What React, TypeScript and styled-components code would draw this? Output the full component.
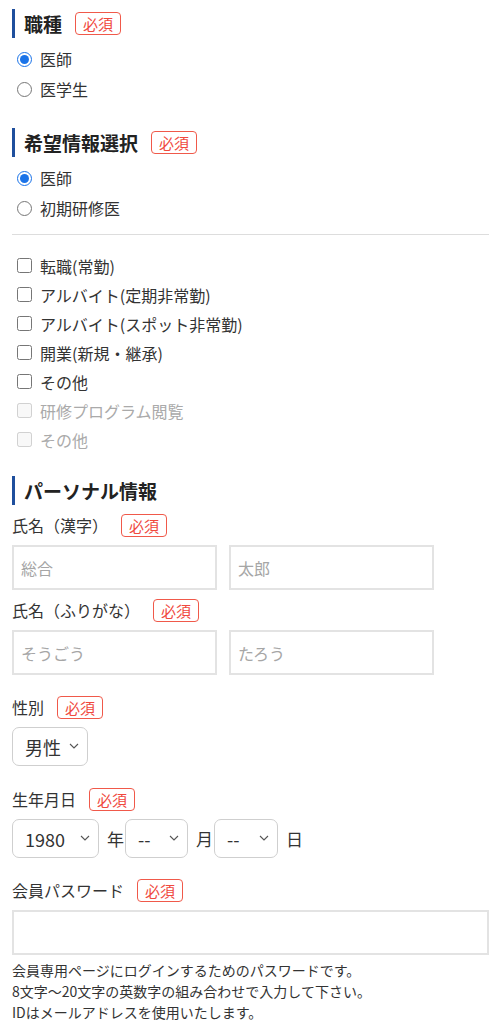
import React from 'react';
import styled, { createGlobalStyle } from 'styled-components';

const GlobalStyle = createGlobalStyle`
  body {
    margin: 0;
    background: #fff;
    color: #333;
    font-family: "Noto Sans CJK JP", "Noto Sans", sans-serif;
  }
  * {
    box-sizing: border-box;
  }
`;

const Page = styled.div`
  padding: 9px 6px 0 12px;
`;

const Section = styled.section<{ gap?: number }>`
  margin-top: ${(p) => p.gap ?? 0}px;
`;

const Heading = styled.h2`
  display: flex;
  align-items: center;
  margin: 0;
  height: 29px;
  padding-left: 9px;
  border-left: 3px solid #1f4f9d;
  font-size: 19px;
  font-weight: 700;
  color: #222;
`;

const Badge = styled.span`
  display: inline-flex;
  align-items: center;
  justify-content: center;
  height: 23px;
  margin-left: 13px;
  padding: 0 7px;
  border: 1.5px solid #f0594a;
  border-radius: 4px;
  color: #f0493e;
  font-size: 15px;
  font-weight: 400;
`;

const OptionList = styled.div<{ row: number; top?: number }>`
  display: flex;
  flex-direction: column;
  margin-top: ${(p) => p.top ?? 6}px;

  label {
    height: ${(p) => p.row}px;
  }
`;

const Option = styled.label<{ disabled?: boolean }>`
  display: flex;
  align-items: center;
  font-size: 16px;
  color: ${(p) => (p.disabled ? '#aaa' : '#333')};

  input {
    width: 15px;
    height: 15px;
    margin: 0 8px 0 5px;
    accent-color: #1a73e8;
  }
`;

const Divider = styled.hr`
  margin: 11px 0 0;
  border: none;
  border-top: 1.5px solid #ddd;
`;

const FieldLabel = styled.div`
  display: flex;
  align-items: center;
  height: 24px;
  font-size: 16px;
  color: #333;
`;

const Row = styled.div`
  display: flex;
  align-items: center;
  gap: 12px;
  margin-top: 8px;
`;

const TextInput = styled.input<{ wide?: boolean }>`
  width: ${(p) => (p.wide ? '477px' : '205px')};
  height: 45px;
  padding: 0 7px;
  border: 2px solid #e3e3e3;
  border-radius: 0;
  font-family: inherit;
  font-size: 16px;
  color: #333;
  outline: none;

  &::placeholder {
    color: #a6a6a6;
  }
`;

const SelectWrap = styled.div<{ w: number }>`
  position: relative;
  width: ${(p) => p.w}px;
  height: 39px;
`;

const Select = styled.select`
  appearance: none;
  width: 100%;
  height: 100%;
  padding: 0 0 0 12px;
  border: 1.5px solid #cfcfcf;
  border-radius: 7px;
  background: #fff;
  font-family: inherit;
  font-size: 18px;
  color: #333;
`;

const Chevron = styled.svg`
  position: absolute;
  right: 9px;
  top: 16px;
  pointer-events: none;
`;

const DateRow = styled.div`
  display: flex;
  align-items: center;
  margin-top: 8px;
  font-size: 17px;
  color: #333;
`;

const Unit = styled.span`
  margin: 0 1px 0 8px;
`;

const Help = styled.p`
  margin: 5px 0 0;
  font-size: 14px;
  line-height: 21px;
  color: #333;
`;

const Dropdown: React.FC<{ w: number; value: string }> = ({ w, value }) => (
  <SelectWrap w={w}>
    <Select defaultValue={value}>
      <option>{value}</option>
    </Select>
    <Chevron width="10" height="6" viewBox="0 0 10 6">
      <path d="M1 1l4 4 4-4" fill="none" stroke="#555" strokeWidth="1.1" />
    </Chevron>
  </SelectWrap>
);

const checks = [
  { t: '転職(常勤)' },
  { t: 'アルバイト(定期非常勤)' },
  { t: 'アルバイト(スポット非常勤)' },
  { t: '開業(新規・継承)' },
  { t: 'その他' },
  { t: '研修プログラム閲覧', off: true },
  { t: 'その他', off: true },
];

export default function App() {
  return (
    <Page>
      <GlobalStyle />
      <Section>
        <Heading>
          職種<Badge>必須</Badge>
        </Heading>
        <OptionList row={30}>
          <Option>
            <input type="radio" name="job" defaultChecked />
            医師
          </Option>
          <Option>
            <input type="radio" name="job" />
            医学生
          </Option>
        </OptionList>
      </Section>

      <Section gap={24}>
        <Heading>
          希望情報選択<Badge>必須</Badge>
        </Heading>
        <OptionList row={30}>
          <Option>
            <input type="radio" name="want" defaultChecked />
            医師
          </Option>
          <Option>
            <input type="radio" name="want" />
            初期研修医
          </Option>
        </OptionList>
        <Divider />
        <OptionList row={29} top={16}>
          {checks.map((c, i) => (
            <Option key={i} disabled={c.off}>
              <input type="checkbox" disabled={c.off} />
              {c.t}
            </Option>
          ))}
        </OptionList>
      </Section>

      <Section gap={22}>
        <Heading>パーソナル情報</Heading>
        <Section gap={8}>
          <FieldLabel>
            氏名（漢字）<Badge>必須</Badge>
          </FieldLabel>
          <Row>
            <TextInput placeholder="総合" />
            <TextInput placeholder="太郎" />
          </Row>
        </Section>
        <Section gap={8}>
          <FieldLabel>
            氏名（ふりがな）<Badge>必須</Badge>
          </FieldLabel>
          <Row>
            <TextInput placeholder="そうごう" />
            <TextInput placeholder="たろう" />
          </Row>
        </Section>
        <Section gap={20}>
          <FieldLabel>
            性別<Badge>必須</Badge>
          </FieldLabel>
          <DateRow>
            <Dropdown w={76} value="男性" />
          </DateRow>
        </Section>
        <Section gap={21}>
          <FieldLabel>
            生年月日<Badge>必須</Badge>
          </FieldLabel>
          <DateRow>
            <Dropdown w={87} value="1980" />
            <Unit>年</Unit>
            <Dropdown w={63} value="--" />
            <Unit>月</Unit>
            <Dropdown w={64} value="--" />
            <Unit>日</Unit>
          </DateRow>
        </Section>
        <Section gap={20}>
          <FieldLabel>
            会員パスワード<Badge>必須</Badge>
          </FieldLabel>
          <Row>
            <TextInput wide type="password" />
          </Row>
          <Help>
            会員専用ページにログインするためのパスワードです。
            <br />
            8文字〜20文字の英数字の組み合わせで入力して下さい。
            <br />
            IDはメールアドレスを使用いたします。
          </Help>
        </Section>
      </Section>
    </Page>
  );
}
